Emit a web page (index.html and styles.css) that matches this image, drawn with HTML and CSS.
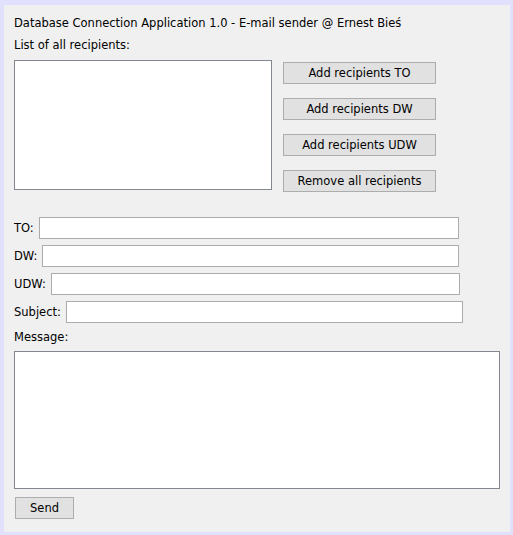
FILE: index.html
```html
<!DOCTYPE html>
<html>
<head>
<meta charset="utf-8">
<link rel="stylesheet" href="styles.css">
</head>
<body>
<div class="panel">
  <div class="title">Database Connection Application 1.0 - E-mail sender @ Ernest Bieś</div>
  <div class="label list-label">List of all recipients:</div>
  <div class="top-row">
    <div class="listbox"></div>
    <div class="buttons">
      <button class="btn">Add recipients TO</button>
      <button class="btn">Add recipients DW</button>
      <button class="btn">Add recipients UDW</button>
      <button class="btn">Remove all recipients</button>
    </div>
  </div>
  <div class="fields">
    <div class="field"><span class="label">TO:</span><input class="input w-to" type="text"></div>
    <div class="field"><span class="label">DW:</span><input class="input w-dw" type="text"></div>
    <div class="field"><span class="label">UDW:</span><input class="input w-udw" type="text"></div>
    <div class="field"><span class="label">Subject:</span><input class="input w-subject" type="text"></div>
  </div>
  <div class="label msg-label">Message:</div>
  <textarea class="message"></textarea>
  <button class="btn send">Send</button>
</div>
</body>
</html>
```
FILE: styles.css
```css
html, body {
  margin: 0;
  padding: 0;
  background: #e1e1fd;
}
body {
  width: 513px;
  height: 535px;
  overflow: hidden;
  font-family: "DejaVu Sans", Tahoma, sans-serif;
  font-size: 11.5px;
  color: #000;
}
.panel {
  box-sizing: border-box;
  margin: 5px 0 0 4px;
  width: 506px;
  height: 527px;
  background: #f0f0f0;
  padding: 10px 10px 0 10px;
  display: flex;
  flex-direction: column;
  align-items: flex-start;
}
.title, .label {
  line-height: 16px;
  white-space: nowrap;
}
.list-label {
  margin-top: 6px;
}
.top-row {
  display: flex;
  margin-top: 7px;
  gap: 11px;
}
.listbox {
  box-sizing: border-box;
  width: 258px;
  height: 130px;
  background: #fff;
  border: 1px solid #828790;
}
.buttons {
  display: flex;
  flex-direction: column;
  gap: 14px;
  padding-top: 2px;
}
.btn {
  box-sizing: border-box;
  width: 153px;
  height: 22px;
  margin: 0;
  padding: 0;
  background: #e1e1e1;
  border: 1px solid #adadad;
  border-radius: 0;
  font-family: inherit;
  font-size: 11.5px;
  color: #000;
}
.fields {
  display: flex;
  flex-direction: column;
  gap: 6px;
  margin-top: 25px;
}
.field {
  display: flex;
  align-items: center;
  gap: 5px;
  height: 22px;
}
.input {
  box-sizing: border-box;
  height: 22px;
  margin: 0;
  padding: 0 3px;
  background: #fff;
  border: 1px solid #acacac;
  font-family: inherit;
  font-size: 11.5px;
}
.w-to { width: 420px; }
.w-dw { width: 417px; }
.w-udw { width: 409px; }
.w-subject { width: 397px; }
.msg-label {
  margin-top: 6px;
}
.message {
  box-sizing: border-box;
  width: 486px;
  height: 138px;
  margin: 6px 0 0 0;
  padding: 2px;
  background: #fff;
  border: 1px solid #828790;
  resize: none;
  font-family: inherit;
  font-size: 11.5px;
}
.send {
  width: 59px;
  margin: 8px 0 0 1px;
}
```
